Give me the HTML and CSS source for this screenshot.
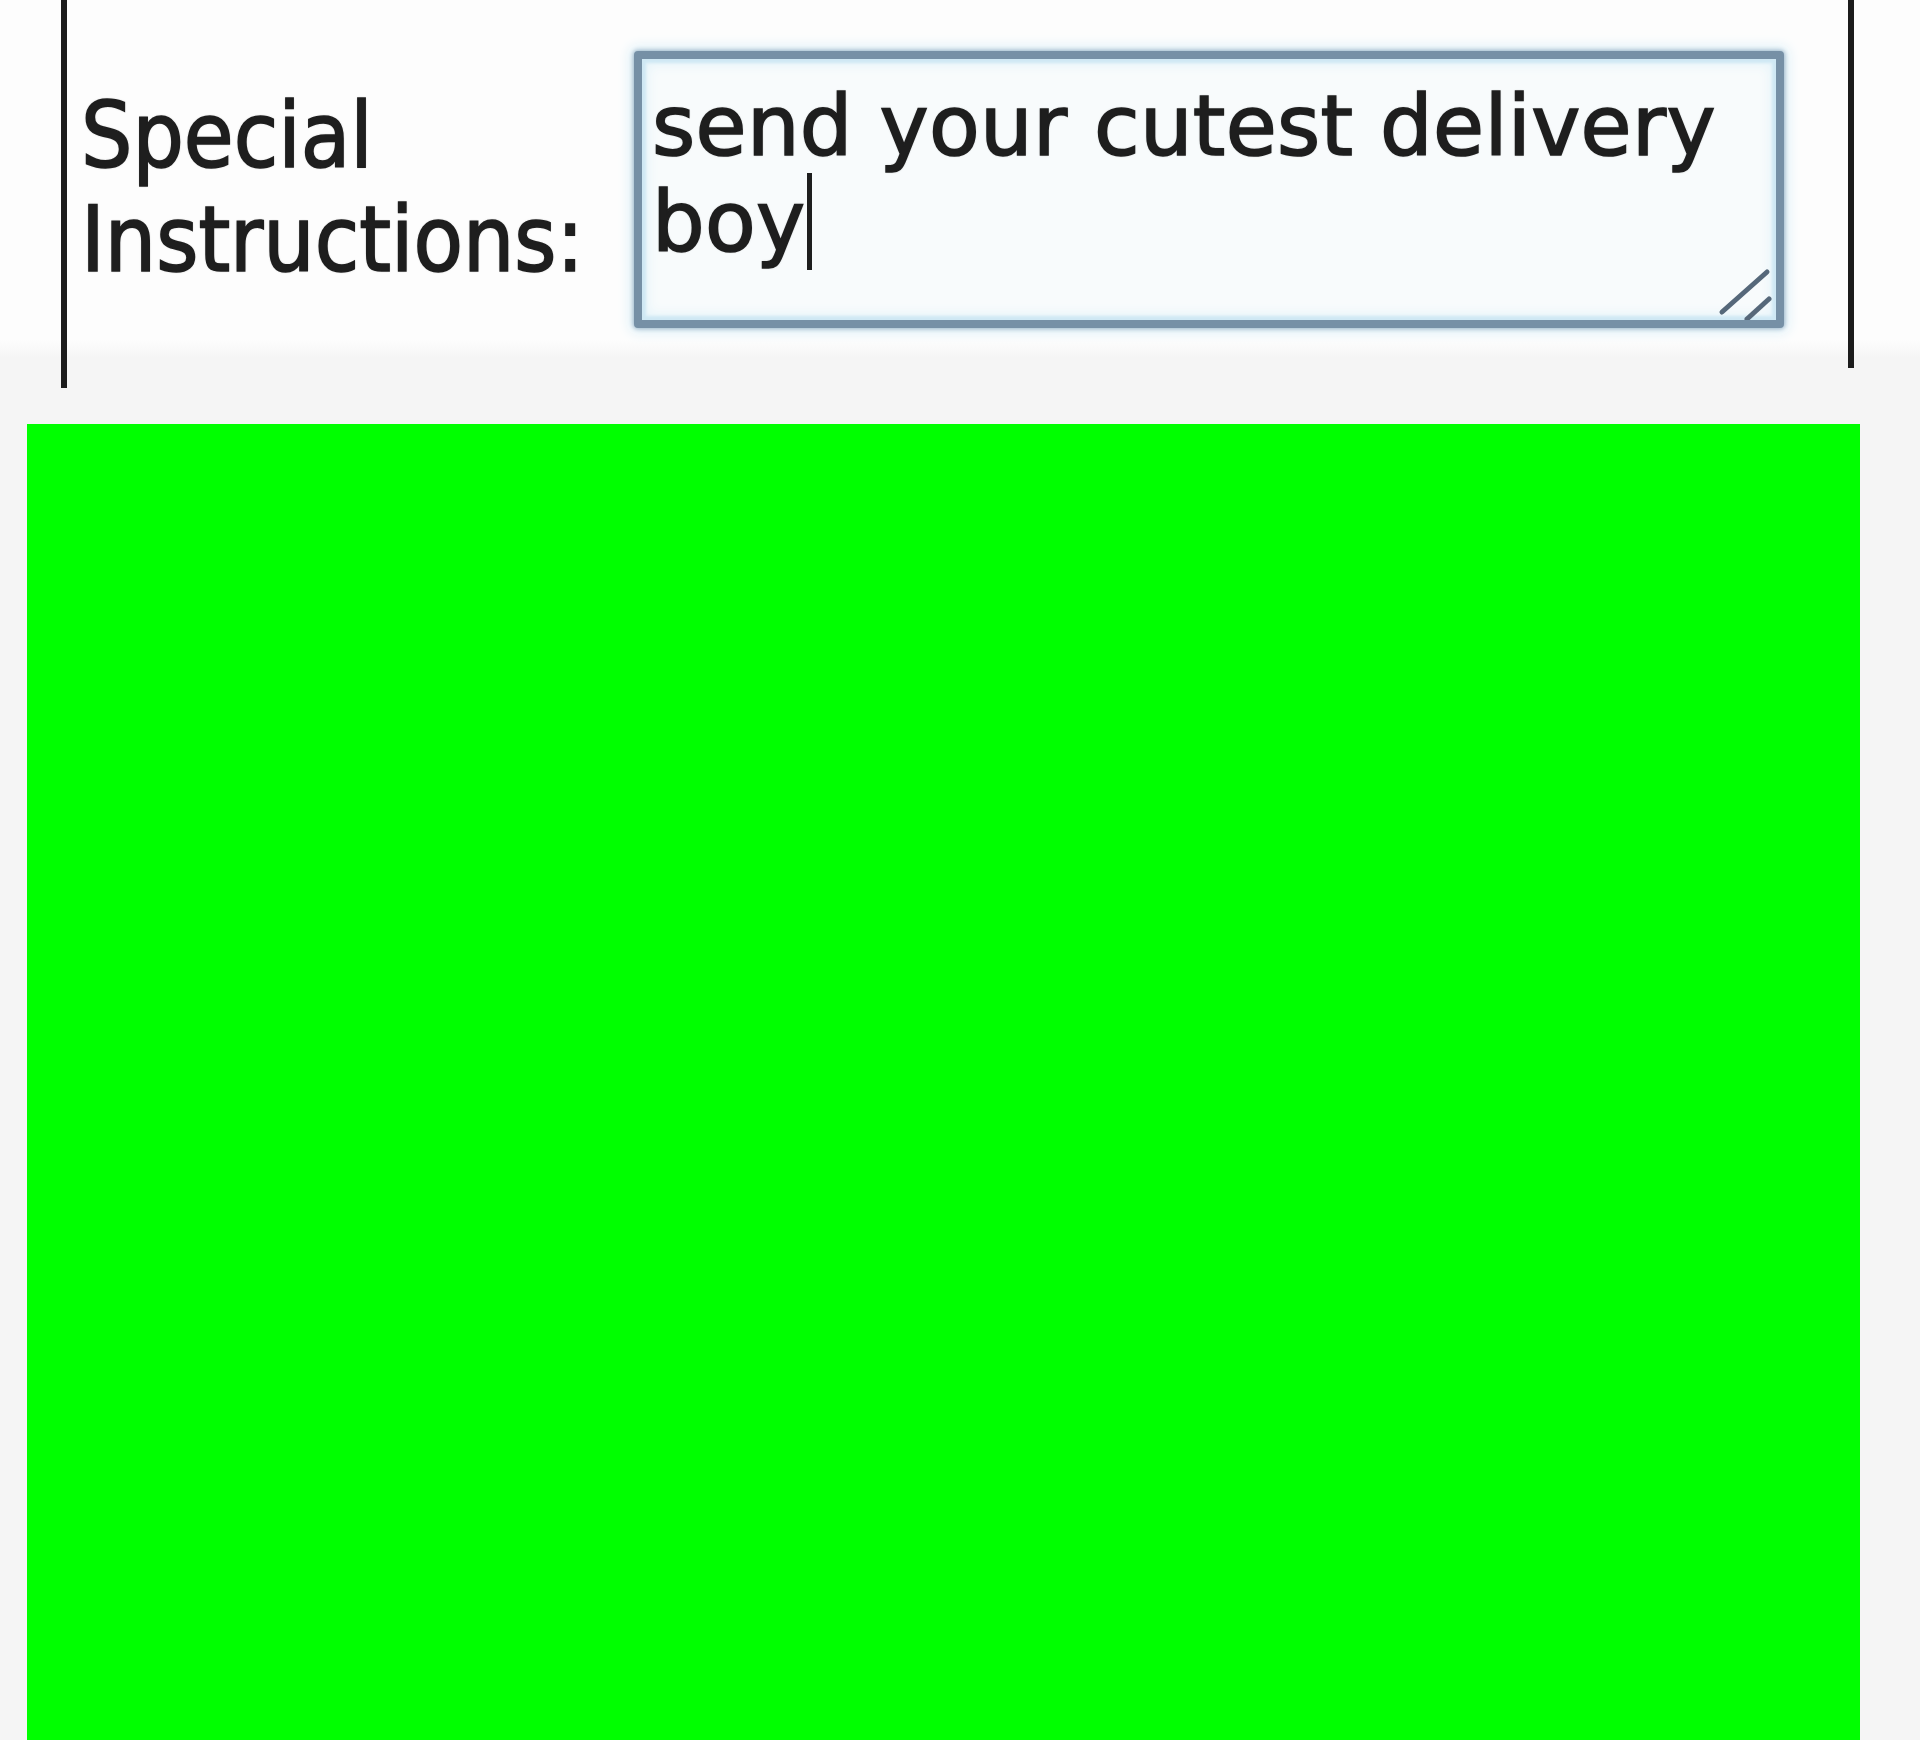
FILE: index.html
```html
<!DOCTYPE html>
<html>
<head>
<meta charset="utf-8">
<link rel="stylesheet" href="styles.css">
</head>
<body>
<div class="page">
  <div class="form">
    <div class="label">Special<br>Instructions:</div>
    <div class="textarea">
      <div class="text">send your cutest delivery<br>boy<span class="caret"></span></div>
      <svg class="grip" width="60" height="60" viewBox="0 0 60 60">
        <line x1="6" y1="52" x2="51" y2="12" />
        <line x1="31" y1="59" x2="53" y2="39" />
      </svg>
    </div>
  </div>
  <div class="green"></div>
</div>
</body>
</html>
```

FILE: styles.css
```css
html, body {
  margin: 0;
  padding: 0;
}
body {
  background: #f5f5f5;
}
.page {
  width: 1920px;
  height: 1740px;
  overflow: hidden;
  background: linear-gradient(to bottom, #fdfdfd 0, #fdfdfd 340px, #f5f5f5 358px, #f5f5f5 100%);
}
.form {
  margin-left: 61px;
  width: 1793px;
  height: 388px;
  box-sizing: border-box;
  border-left: 6px solid #1c1c1c;
  padding-left: 14px;
  display: flex;
  align-items: flex-start;
  background: linear-gradient(#1c1c1c, #1c1c1c) right top / 6px 368px no-repeat;
}
.label {
  flex: none;
  width: 553px;
  margin-top: 84px;
  font-family: "DejaVu Sans Condensed", "DejaVu Sans", sans-serif;
  font-size: 90px;
  line-height: 104px;
  color: #1e1e1e;
  -webkit-text-stroke: 1.6px #1e1e1e;
  text-shadow: 0 0 2px rgba(30,30,30,0.5);
}
.textarea {
  flex: none;
  position: relative;
  margin-top: 51px;
  width: 1150px;
  height: 277px;
  box-sizing: border-box;
  border: 8px solid #7690a6;
  border-radius: 4px;
  background: #f8fbfc;
  box-shadow: inset 0 0 3px 4px #cfe8f4, inset 0 0 12px 6px #e6f4fa, 0 0 4px 1px #9ab4c8, 0 0 12px 6px #e4f3f9;
  padding: 21px 0 0 10px;
}
.text {
  font-family: "DejaVu Sans", Verdana, sans-serif;
  font-size: 83px;
  line-height: 93px;
  letter-spacing: 0.3px;
  color: #1e1e1e;
  white-space: nowrap;
  -webkit-text-stroke: 1.6px #1e1e1e;
  text-shadow: 0 0 2px rgba(30,30,30,0.5);
}
.caret {
  display: inline-block;
  width: 5px;
  height: 97px;
  margin-left: 1px;
  background: #1e1e1e;
  vertical-align: -19px;
}
.grip {
  position: absolute;
  right: 0;
  bottom: 0;
}
.grip line {
  stroke: #56687a;
  stroke-width: 5;
  stroke-linecap: round;
}
.green {
  margin-left: 27px;
  margin-top: 36px;
  width: 1833px;
  height: 1316px;
  background: #00ff00;
}
```
